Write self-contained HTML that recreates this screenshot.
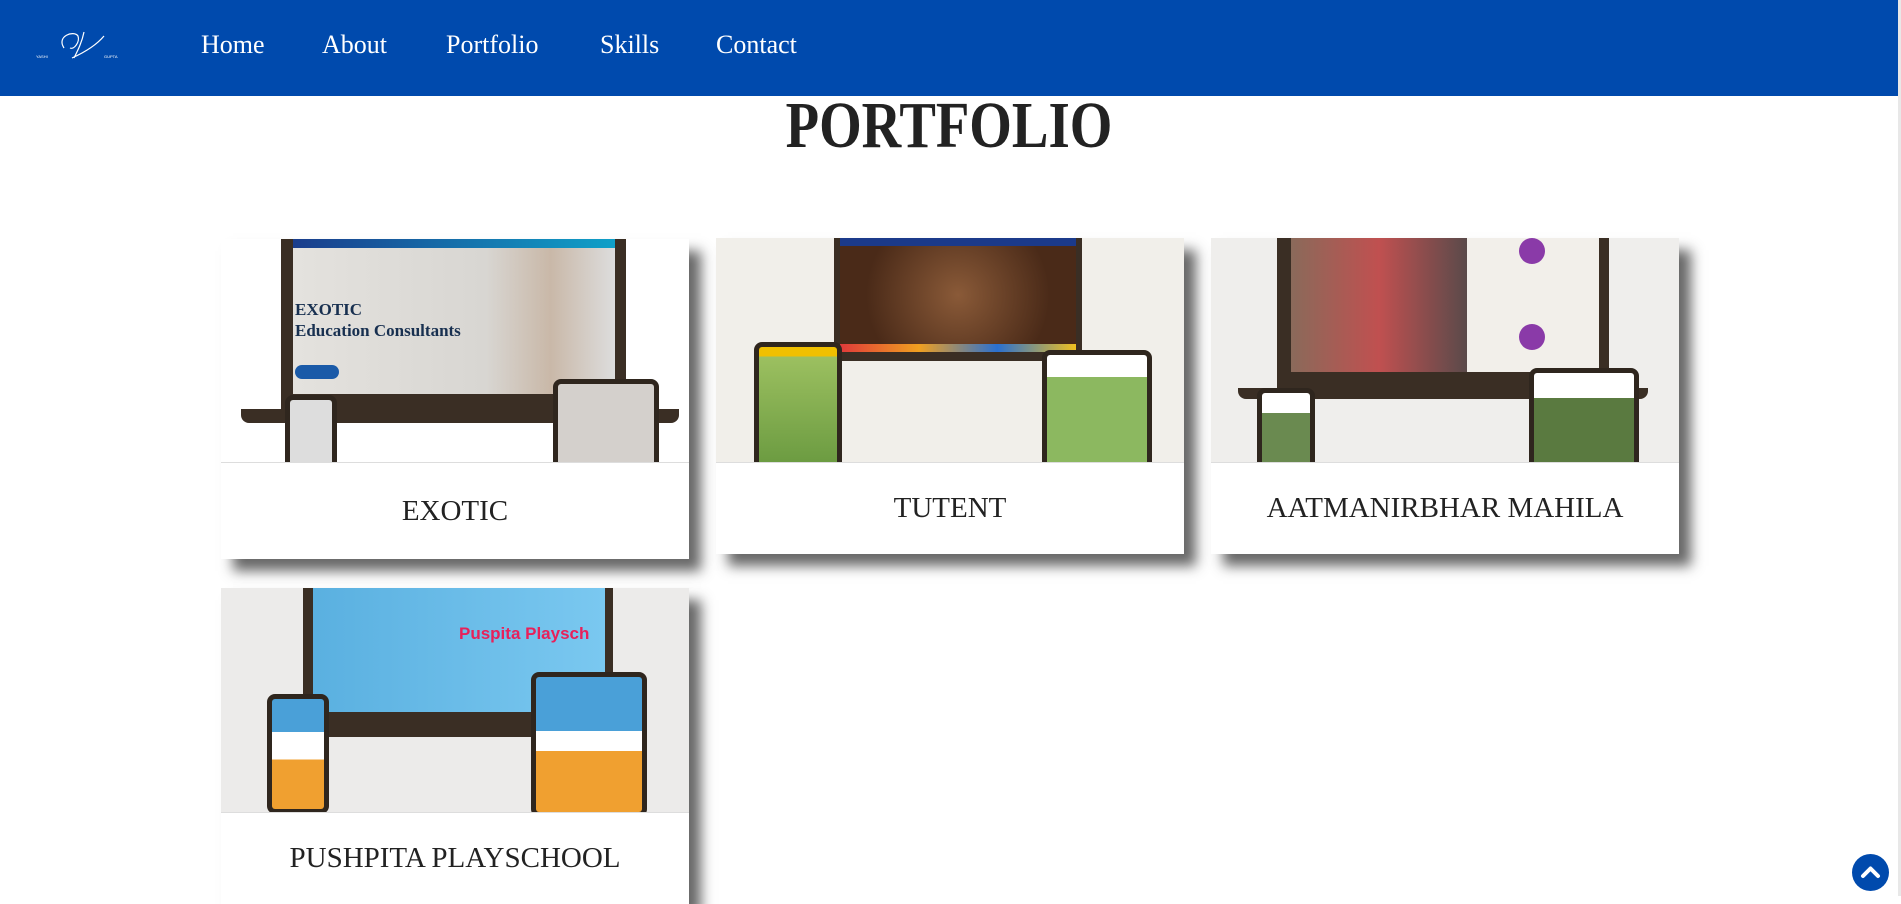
<!DOCTYPE html>
<html><head><meta charset="utf-8"><style>
*{margin:0;padding:0;box-sizing:border-box}
body{width:1901px;height:896px;overflow:hidden;background:#fff;font-family:"Liberation Serif",serif;position:relative}
nav{position:absolute;left:0;top:0;width:1901px;height:96px;background:#004aad}
nav a{position:absolute;top:30px;color:#fff;font-size:26px;text-decoration:none}
.logo{position:absolute;left:34px;top:28px;width:92px;height:34px}
h1{position:absolute;top:88px;left:0;width:1898px;text-align:center;font-size:66px;color:#222;font-weight:bold;transform:scaleX(0.83);transform-origin:949px 0}
.card{position:absolute;width:468px;background:#fff;box-shadow:12px 12px 12px rgba(40,40,40,.7)}
.img{position:relative;height:223px;background:#efeeec;overflow:hidden}
.cap{height:97px;display:flex;align-items:center;justify-content:center;font-size:29px;color:#222;border-top:1px solid #ddd}
.lap{position:absolute;background:#3a2e24}
.scr{position:absolute}
.base{position:absolute;height:14px;background:#3a2e24;border-radius:0 0 8px 8px}
.dev{position:absolute;background:#2f261e;border-radius:8px;padding:5px}
.dev div{width:100%;height:100%;border-radius:3px}
.sb{position:absolute;right:0;top:0;width:3px;height:896px;background:#e8e8e8}
.top{position:absolute;left:1852px;top:854px;width:37px;height:37px;border-radius:50%;background:#004aad}
</style></head><body>
<nav>
<svg class="logo" viewBox="0 0 92 34"><path d="M30 20 C22 8 40 2 44 8 C46 14 40 22 36 20 M50 4 C48 14 44 22 40 30 M38 30 Q60 20 70 8" fill="none" stroke="#fff" stroke-width="1.2"/><text x="2" y="30" fill="#fff" font-size="4" font-family="Liberation Sans">YASHI</text><text x="70" y="30" fill="#fff" font-size="4" font-family="Liberation Sans">GUPTA</text></svg>
<a style="left:201px">Home</a><a style="left:322px">About</a><a style="left:446px">Portfolio</a><a style="left:600px">Skills</a><a style="left:716px">Contact</a>
</nav>
<h1>PORTFOLIO</h1>

<div class="card" style="left:221px;top:239px">
<div class="img" style="background:#fff">
<div class="lap" style="left:60px;top:0;width:345px;height:170px"></div>
<div class="scr" style="left:72px;top:0;width:322px;height:155px;background:linear-gradient(90deg,#e4e2de 0,#d8d6d2 60%,#c9b8a8 80%,#ddd 100%)"><div style="height:9px;background:linear-gradient(90deg,#1a3d8c,#10a0c8)"></div><div style="position:absolute;left:2px;top:60px;color:#183050;font-weight:bold;font-size:17px;line-height:21px">EXOTIC<br>Education Consultants</div><div style="position:absolute;left:2px;top:126px;width:44px;height:14px;border-radius:7px;background:#1a5aa8"></div></div>
<div class="base" style="left:20px;top:170px;width:438px"></div>
<div class="dev" style="left:64px;top:156px;width:52px;height:80px"><div style="background:#ddd"></div></div>
<div class="dev" style="left:332px;top:140px;width:106px;height:100px"><div style="background:#d4d0cc"></div></div>
</div>
<div class="cap">EXOTIC</div></div>

<div class="card" style="left:716px;top:238px">
<div class="img" style="height:224px;background:#f1efea">
<div class="lap" style="left:118px;top:0;width:248px;height:122px"></div>
<div class="scr" style="left:124px;top:0;width:236px;height:114px;background:radial-gradient(circle at 50% 50%,#8a5a38,#4a2a18 70%)"><div style="height:8px;background:#1b3a8a"></div><div style="position:absolute;bottom:0;left:0;right:0;height:8px;background:linear-gradient(90deg,#e03a3a,#f0a020,#2a70d0,#f0c020)"></div></div>
<div class="base" style="left:90px;top:114px;width:304px;height:9px"></div>
<div class="dev" style="left:38px;top:104px;width:88px;height:130px"><div style="background:linear-gradient(#f0c000 0 8%,#9cc060 8%,#6a9a40)"></div></div>
<div class="dev" style="left:326px;top:112px;width:110px;height:120px"><div style="background:linear-gradient(#fff 0 20%,#8cb860 20%)"></div></div>
</div>
<div class="cap" style="height:92px">TUTENT</div></div>

<div class="card" style="left:1211px;top:238px">
<div class="img" style="height:224px;background:#efeeec">
<div class="lap" style="left:66px;top:0;width:332px;height:160px"></div>
<div class="scr" style="left:80px;top:0;width:176px;height:134px;background:linear-gradient(90deg,#8a6a5a,#c05050,#5a4a4a)"></div>
<div class="scr" style="left:256px;top:0;width:132px;height:134px;background:#f2efea"><div style="position:absolute;left:52px;top:0;width:26px;height:26px;border-radius:50%;background:#8a3aa8"></div><div style="position:absolute;left:52px;top:86px;width:26px;height:26px;border-radius:50%;background:#8a3aa8"></div></div>
<div class="base" style="left:27px;top:150px;width:410px;height:11px"></div>
<div class="dev" style="left:46px;top:150px;width:58px;height:90px"><div style="background:linear-gradient(#fff 0 25%,#6a8a50 25%)"></div></div>
<div class="dev" style="left:318px;top:130px;width:110px;height:110px"><div style="background:linear-gradient(#fff 0 25%,#5a7a40 25%)"></div></div>
</div>
<div class="cap" style="height:92px">AATMANIRBHAR MAHILA</div></div>

<div class="card" style="left:221px;top:588px">
<div class="img" style="height:224px;background:#ecebea">
<div class="lap" style="left:82px;top:0;width:310px;height:142px"></div>
<div class="scr" style="left:92px;top:0;width:292px;height:124px;background:linear-gradient(90deg,#5ab0e0,#7ac8f0)"><div style="position:absolute;left:146px;top:36px;color:#e8205a;font-weight:bold;font-size:17px;font-family:'Liberation Sans',sans-serif">Puspita Playsch</div></div>
<div class="base" style="left:52px;top:140px;width:370px;height:9px"></div>
<div class="dev" style="left:46px;top:106px;width:62px;height:120px"><div style="background:linear-gradient(#4aa0d8 0 30%,#fff 30% 55%,#f0a030 55%)"></div></div>
<div class="dev" style="left:310px;top:84px;width:116px;height:145px"><div style="background:linear-gradient(#4aa0d8 0 40%,#fff 40% 55%,#f0a030 55%)"></div></div>
</div>
<div class="cap" style="height:92px">PUSHPITA PLAYSCHOOL</div></div>

<div class="sb"></div>
<div class="top"><svg width="37" height="37" viewBox="0 0 37 37"><path d="M11 22 L18.5 14.5 L26 22" fill="none" stroke="#fff" stroke-width="4" stroke-linecap="round" stroke-linejoin="round"/></svg></div>
</body></html>
